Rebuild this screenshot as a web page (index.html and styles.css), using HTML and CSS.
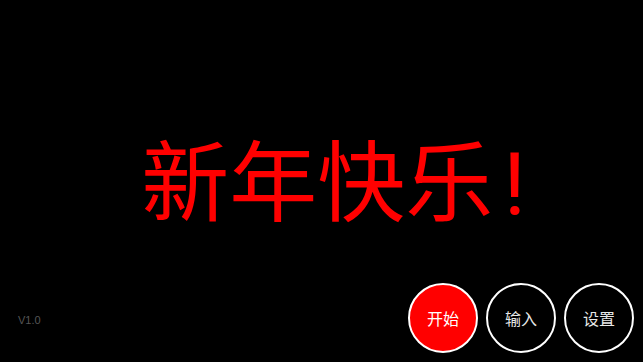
FILE: index.html
```html
<!DOCTYPE html>
<html lang="zh-CN">
<head>
<meta charset="utf-8">
<link rel="stylesheet" href="styles.css">
</head>
<body>
<div class="screen">
  <div class="title-wrap">
    <h1 class="title">新年快乐<span class="bang">!</span></h1>
  </div>
  <div class="bottom-bar">
    <span class="version">V1.0</span>
    <div class="buttons">
      <button class="btn btn-start">开始</button>
      <button class="btn">输入</button>
      <button class="btn">设置</button>
    </div>
  </div>
</div>
</body>
</html>
```

FILE: styles.css
```css
html, body {
  margin: 0;
  padding: 0;
  background: #000;
  width: 100%;
  height: 100%;
  overflow: hidden;
}
.screen {
  display: grid;
  width: 100vw;
  height: 100vh;
  font-family: "Noto Sans CJK SC", "Noto Sans", sans-serif;
}
.title-wrap {
  grid-area: 1 / 1;
  display: flex;
  align-items: center;
  justify-content: center;
  padding: 6px 0 0 24px;
}
.title {
  margin: 0;
  font-family: Roboto, "Noto Sans CJK SC", sans-serif;
  font-size: 88px;
  font-weight: 400;
  line-height: 1;
  color: #ff0000;
  white-space: nowrap;
}
.bang {
  margin-left: 10px;
}
.bottom-bar {
  grid-area: 1 / 1;
  align-self: end;
  display: flex;
  align-items: center;
  justify-content: space-between;
  padding: 0 9px 9px 18px;
}
.version {
  font-family: "Liberation Sans", Arial, sans-serif;
  font-size: 11px;
  color: #555;
  padding-top: 4px;
}
.buttons {
  display: flex;
  gap: 8px;
}
.btn {
  width: 70px;
  height: 70px;
  border-radius: 50%;
  border: 2px solid #fff;
  background: #000;
  color: #e8e8e8;
  font-family: "Noto Sans CJK SC", sans-serif;
  font-size: 16px;
  padding: 0;
  display: flex;
  align-items: center;
  justify-content: center;
}
.btn-start {
  background: #ff0000;
  color: #fff;
}
```
